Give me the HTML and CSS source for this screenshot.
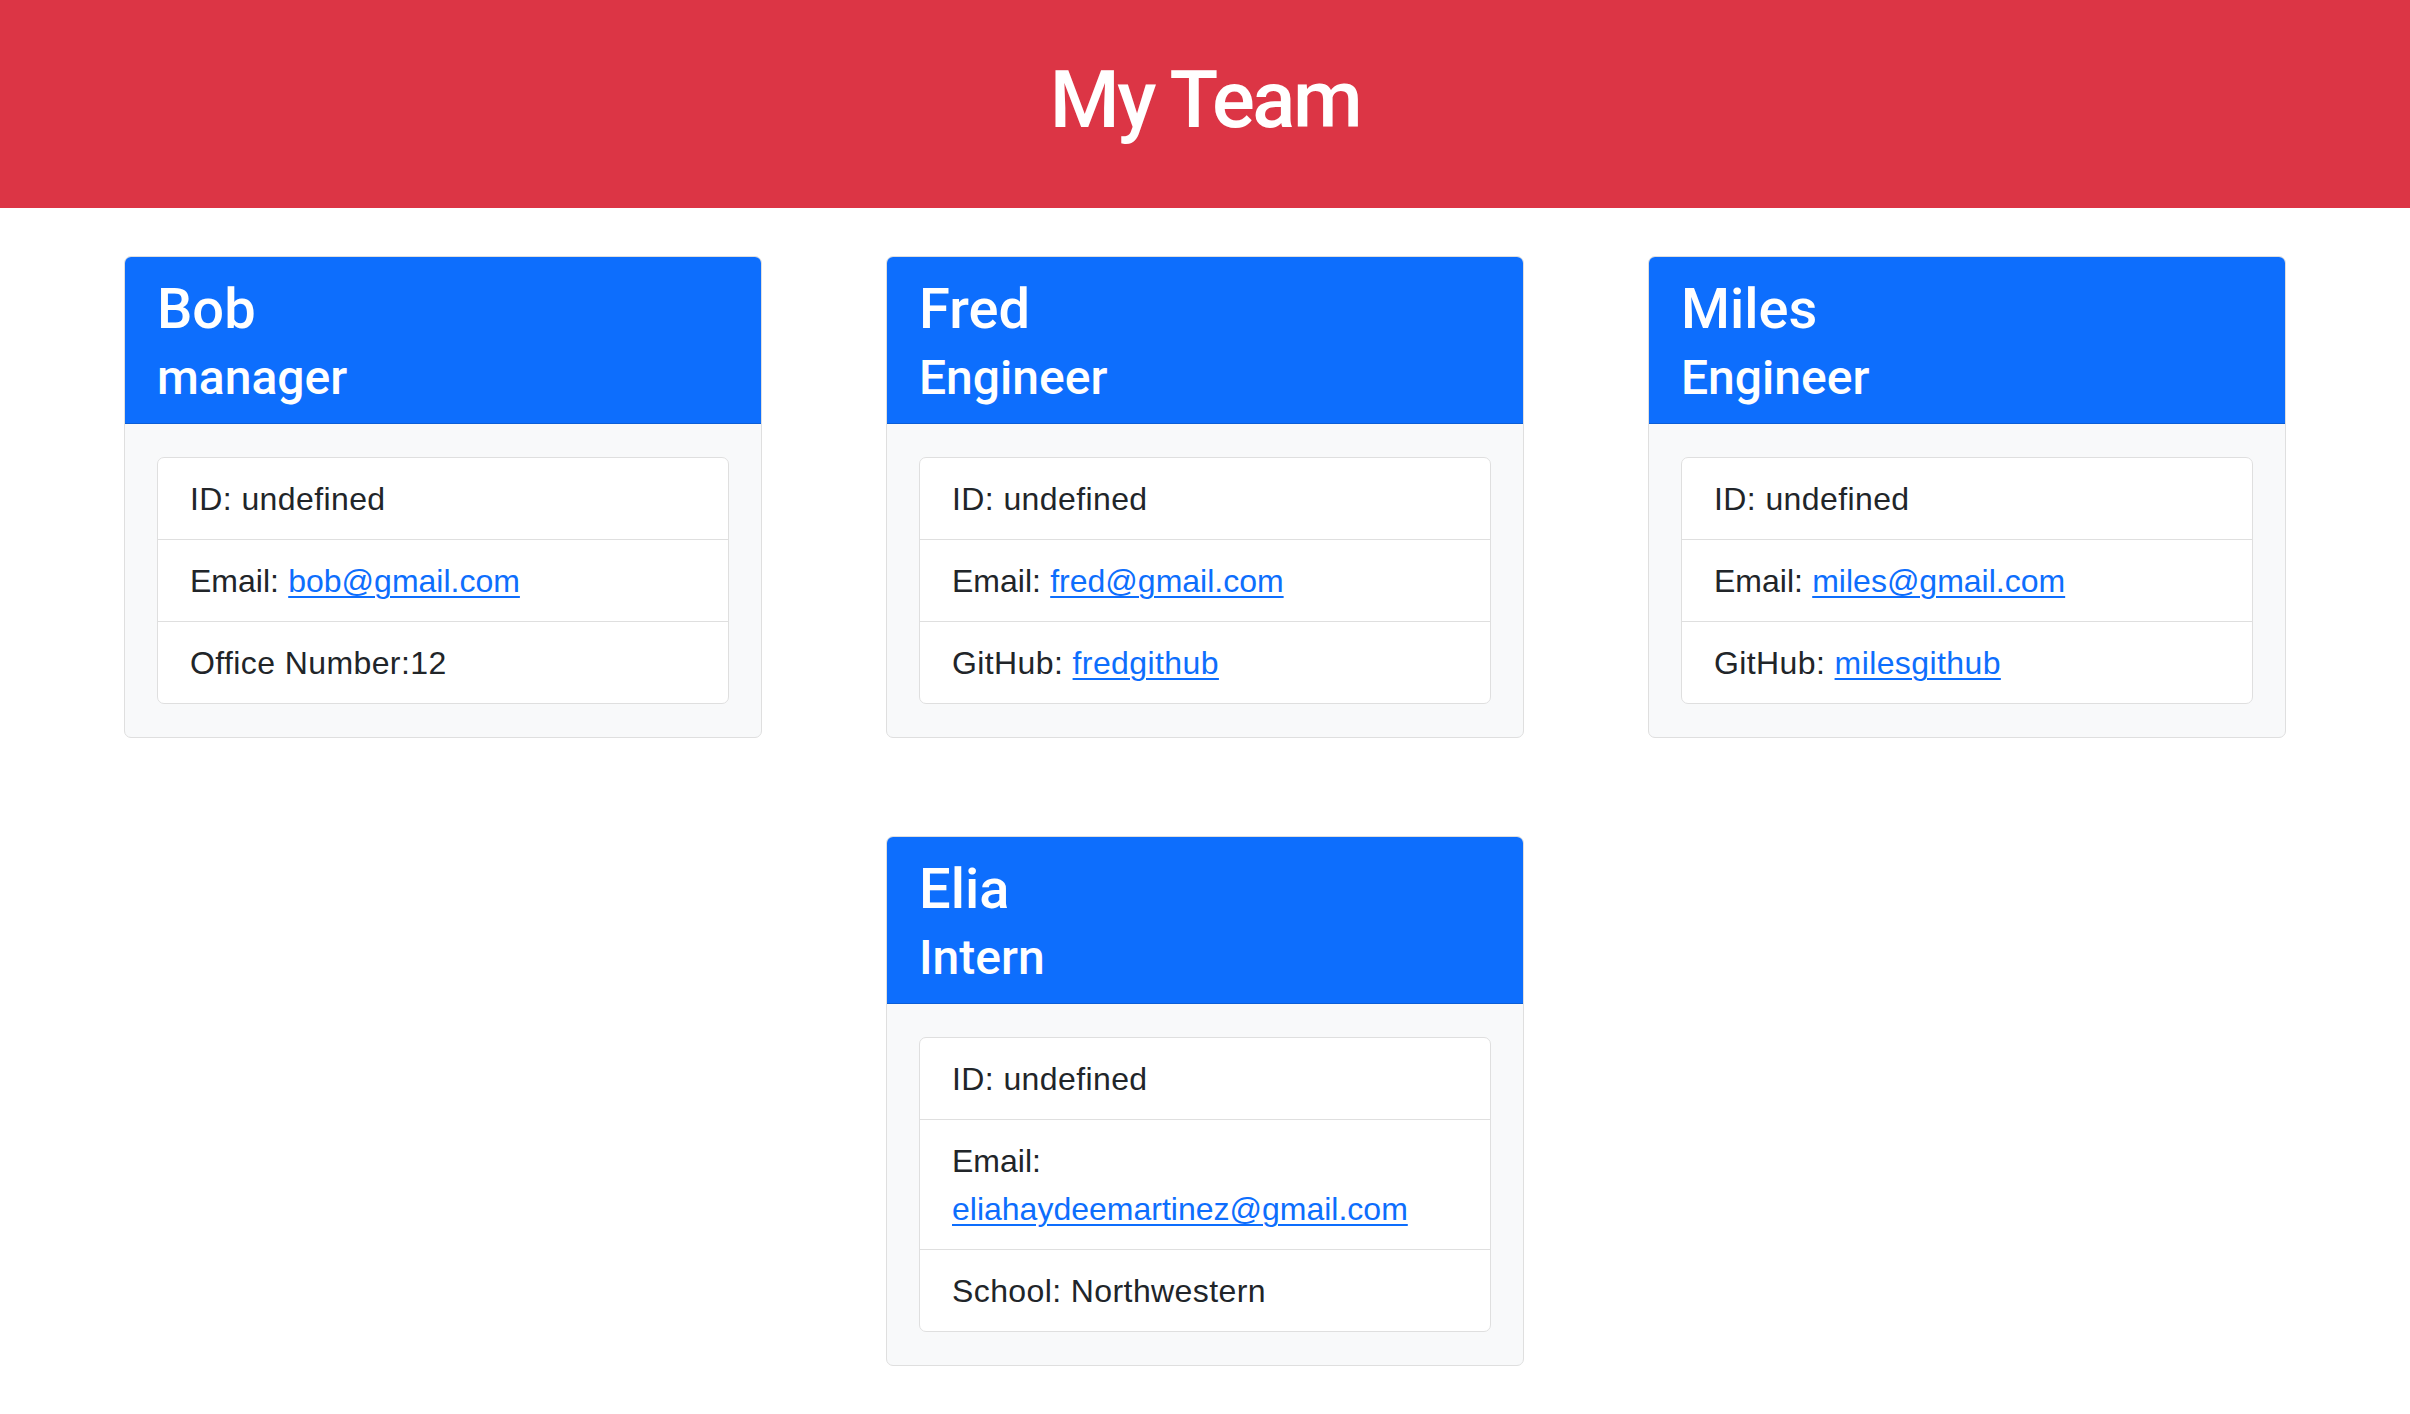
FILE: index.html
```html
<!DOCTYPE html>
<html lang="en">
<head>
<meta charset="utf-8">
<title>My Team</title>
<link rel="stylesheet" href="styles.css">
</head>
<body>
<header class="banner">
  <h1 class="banner-title">My Team</h1>
</header>
<main class="team">
  <article class="card">
    <div class="card-header">
      <h2 class="card-name">Bob</h2>
      <h3 class="card-role">manager</h3>
    </div>
    <div class="card-body">
      <ul class="info-list">
        <li class="info-item">ID: undefined</li>
        <li class="info-item"><span class="info-label">Email:</span> <a class="info-link info-link-email" href="mailto:bob@gmail.com">bob@gmail.com</a></li>
        <li class="info-item">Office Number:12</li>
      </ul>
    </div>
  </article>
  <article class="card">
    <div class="card-header">
      <h2 class="card-name">Fred</h2>
      <h3 class="card-role">Engineer</h3>
    </div>
    <div class="card-body">
      <ul class="info-list">
        <li class="info-item">ID: undefined</li>
        <li class="info-item"><span class="info-label">Email:</span> <a class="info-link info-link-email" href="mailto:fred@gmail.com">fred@gmail.com</a></li>
        <li class="info-item">GitHub: <a class="info-link" href="#">fredgithub</a></li>
      </ul>
    </div>
  </article>
  <article class="card">
    <div class="card-header">
      <h2 class="card-name">Miles</h2>
      <h3 class="card-role">Engineer</h3>
    </div>
    <div class="card-body">
      <ul class="info-list">
        <li class="info-item">ID: undefined</li>
        <li class="info-item"><span class="info-label">Email:</span> <a class="info-link info-link-email" href="mailto:miles@gmail.com">miles@gmail.com</a></li>
        <li class="info-item">GitHub: <a class="info-link" href="#">milesgithub</a></li>
      </ul>
    </div>
  </article>
  <article class="card">
    <div class="card-header">
      <h2 class="card-name">Elia</h2>
      <h3 class="card-role">Intern</h3>
    </div>
    <div class="card-body">
      <ul class="info-list">
        <li class="info-item">ID: undefined</li>
        <li class="info-item"><span class="info-label">Email:</span> <a class="info-link info-link-email" href="mailto:eliahaydeemartinez@gmail.com">eliahaydeemartinez@gmail.com</a></li>
        <li class="info-item">School: Northwestern</li>
      </ul>
    </div>
  </article>
</main>
</body>
</html>
```
FILE: styles.css
```css
* {
  box-sizing: border-box;
}

body {
  margin: 0;
  background: #ffffff;
  color: #212529;
  font-family: "Liberation Sans", Arial, sans-serif;
}

.banner {
  height: 208px;
  padding-top: 52px;
  background: #dc3545;
  text-align: center;
}

.banner-title {
  margin: 0;
  font-family: Roboto, "Liberation Sans", sans-serif;
  font-size: 80px;
  line-height: 96px;
  font-weight: 500;
  letter-spacing: -2.5px;
  color: #ffffff;
}

.team {
  display: flex;
  flex-wrap: wrap;
  justify-content: center;
  column-gap: 124px;
  row-gap: 98px;
  padding: 48px 0 48px;
}

.card {
  width: 638px;
  border: 1px solid #dfdfdf;
  border-radius: 7px;
  overflow: hidden;
  background: #f8f9fa;
}

.card-header {
  padding: 19px 32px 16px;
  background: #0d6efd;
  border-bottom: 1px solid #0b5ed7;
  color: #ffffff;
}

.card-name {
  margin: 0 0 6px;
  font-family: Roboto, "Liberation Sans", sans-serif;
  font-size: 56px;
  line-height: 67px;
  font-weight: 500;
}

.card-role {
  margin: 0;
  font-family: Roboto, "Liberation Sans", sans-serif;
  font-size: 48px;
  line-height: 58px;
  font-weight: 500;
}

.card-body {
  padding: 33px 32px;
}

.info-list {
  margin: 0;
  padding: 0;
  list-style: none;
  background: #ffffff;
  border: 1px solid #dfdfdf;
  border-radius: 7px;
}

.info-item {
  padding: 17px 32px 16px;
  font-size: 32px;
  line-height: 48px;
  letter-spacing: 0.4px;
}

.info-item + .info-item {
  border-top: 1px solid #dfdfdf;
}

.info-label {
  letter-spacing: 0;
}

.info-link {
  color: #0d6efd;
  text-decoration: underline;
  text-decoration-thickness: 2px;
  text-underline-offset: 4px;
}

.info-link-email {
  letter-spacing: 0;
}
```
